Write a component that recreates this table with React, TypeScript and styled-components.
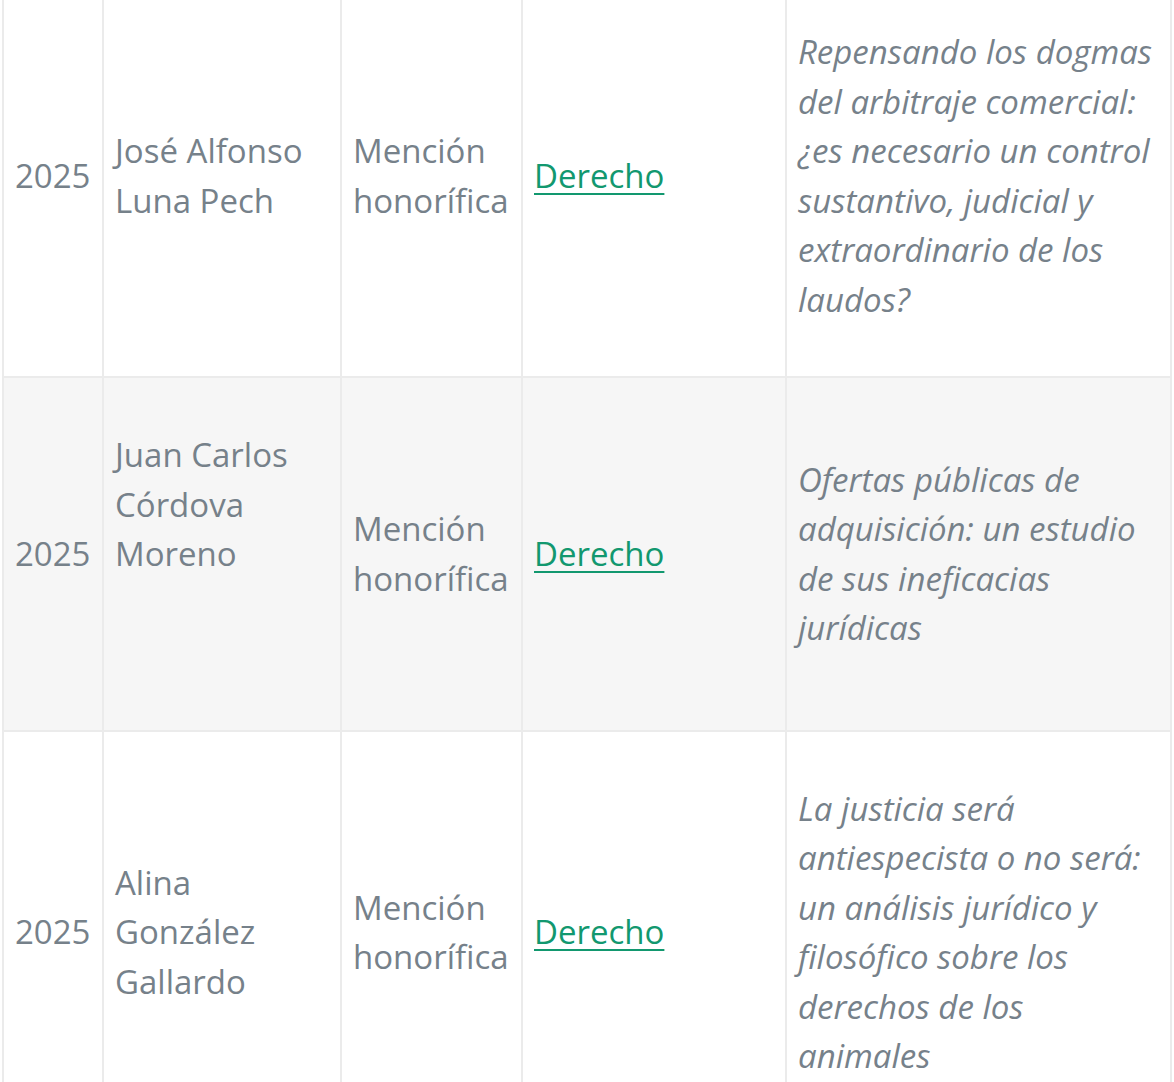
import React from 'react';
import styled, { createGlobalStyle } from 'styled-components';

// Page reset
const GlobalStyle = createGlobalStyle`
  html, body {
    margin: 0;
    padding: 0;
    background: #ffffff;
    overflow: hidden;
  }
`;

interface Award {
  year: string;
  name: string;
  distinction: string;
  area: string;
  title: string;
  blankLines?: number;
}

const awards: Award[] = [
  {
    year: '2025',
    name: 'José Alfonso Luna Pech',
    distinction: 'Mención honorífica',
    area: 'Derecho',
    title:
      'Repensando los dogmas del arbitraje comercial: ¿es necesario un control sustantivo, judicial y extraordinario de los laudos?',
  },
  {
    year: '2025',
    name: 'Juan Carlos Córdova Moreno',
    distinction: 'Mención honorífica',
    area: 'Derecho',
    title: 'Ofertas públicas de adquisición: un estudio de sus ineficacias jurídicas',
    blankLines: 2,
  },
  {
    year: '2025',
    name: 'Alina González Gallardo',
    distinction: 'Mención honorífica',
    area: 'Derecho',
    title:
      'La justicia será antiespecista o no será: un análisis jurídico y filosófico sobre los derechos de los animales',
  },
];

// Column widths, left to right
const columnWidths = [100, 238, 181, 264, 385];

const LINE = 49.5;
const PAD_Y = 52;

// Table shell, scrolled so the first row is cut at the top
const AwardsTable = styled.table`
  width: 1168px;
  margin: -27px 0 0 2px;
  border-collapse: collapse;
  table-layout: fixed;
  font-family: 'Open Sans', 'Noto Sans', sans-serif;
  font-size: 33px;
  line-height: ${LINE}px;
  color: #76818a;
`;

const Column = styled.col<{ $width: number }>`
  width: ${(p) => p.$width}px;
`;

const Row = styled.tr<{ $striped: boolean }>`
  background-color: ${(p) => (p.$striped ? '#f6f6f6' : '#ffffff')};
`;

const Cell = styled.td<{ $blankLines?: number }>`
  border: 2px solid #ebebeb;
  padding: ${PAD_Y}px 11px;
  padding-bottom: ${(p) => PAD_Y + (p.$blankLines ?? 0) * LINE}px;
  vertical-align: middle;
`;

const TitleCell = styled(Cell)`
  font-style: italic;
`;

const AreaLink = styled.a`
  color: #12986f;
  text-decoration: underline;
  text-decoration-thickness: 2px;
  text-underline-offset: 5px;
`;

const App: React.FC = () => {
  return (
    <>
      <GlobalStyle />
      <AwardsTable>
        <colgroup>
          {columnWidths.map((w, i) => (
            <Column key={i} $width={w} />
          ))}
        </colgroup>
        <tbody>
          {awards.map((a, i) => (
            <Row key={a.name} $striped={i % 2 === 1}>
              <Cell>{a.year}</Cell>
              <Cell $blankLines={a.blankLines}>{a.name}</Cell>
              <Cell>{a.distinction}</Cell>
              <Cell>
                <AreaLink href="#">{a.area}</AreaLink>
              </Cell>
              <TitleCell>{a.title}</TitleCell>
            </Row>
          ))}
        </tbody>
      </AwardsTable>
    </>
  );
};

export default App;
